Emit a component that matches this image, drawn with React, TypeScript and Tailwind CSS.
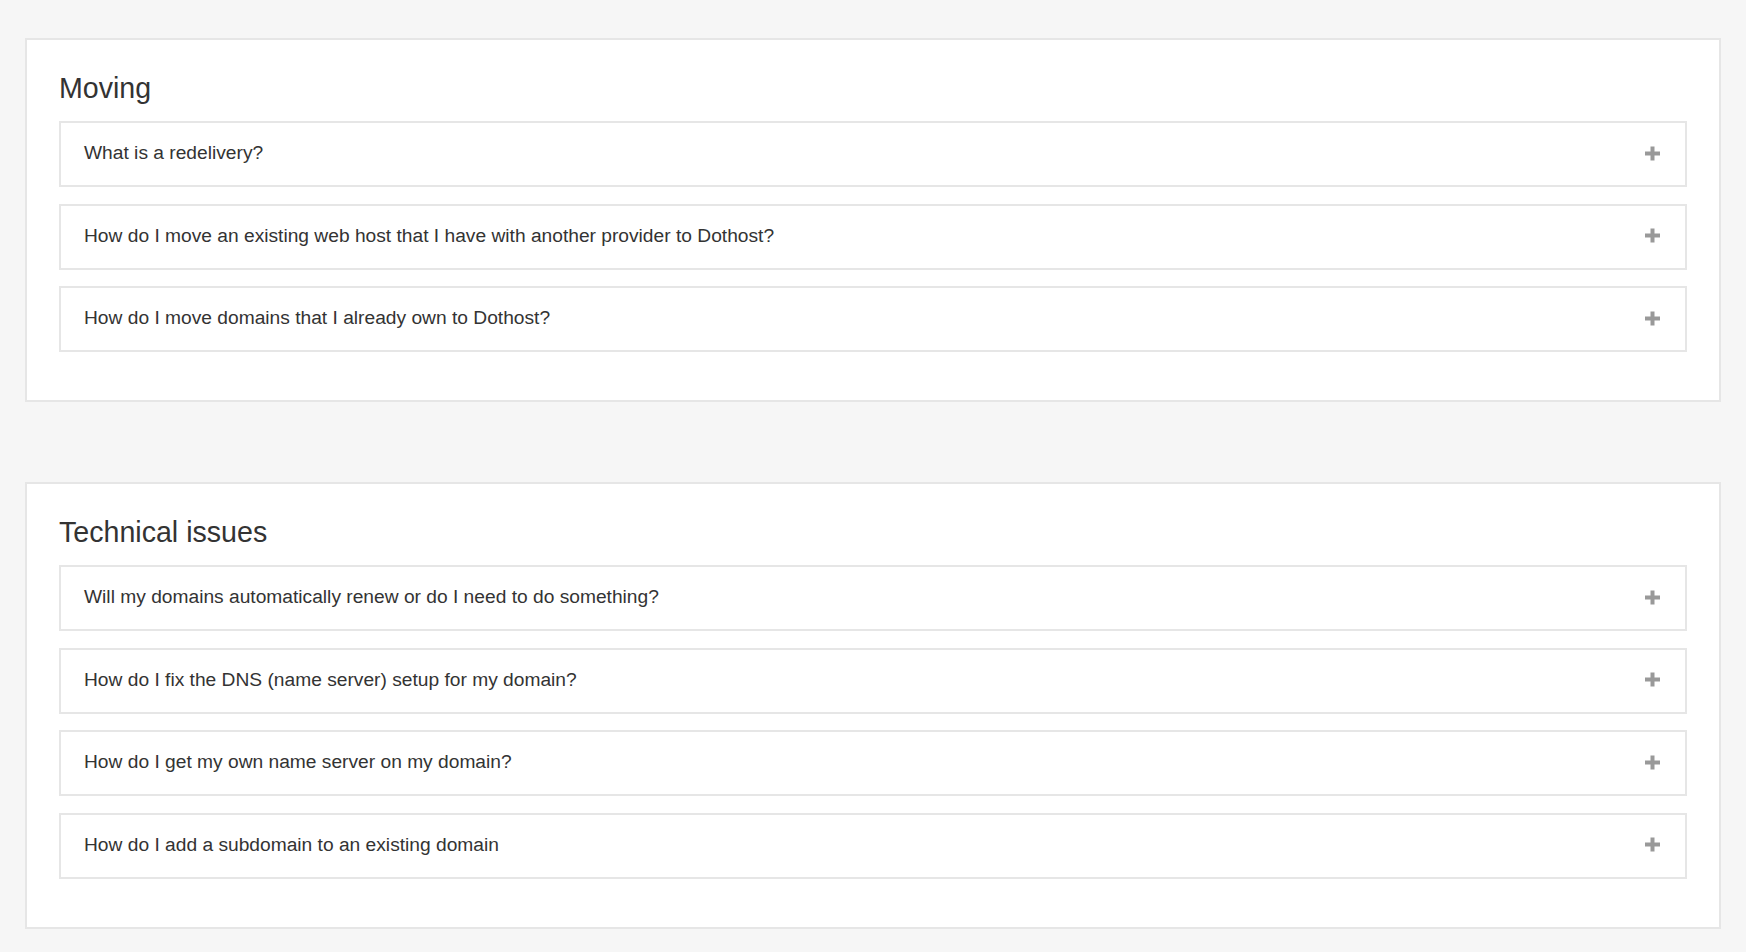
import React from "react";

type Section = {
  title: string;
  questions: string[];
};

const sections: Section[] = [
  {
    title: "Moving",
    questions: [
      "What is a redelivery?",
      "How do I move an existing web host that I have with another provider to Dothost?",
      "How do I move domains that I already own to Dothost?",
    ],
  },
  {
    title: "Technical issues",
    questions: [
      "Will my domains automatically renew or do I need to do something?",
      "How do I fix the DNS (name server) setup for my domain?",
      "How do I get my own name server on my domain?",
      "How do I add a subdomain to an existing domain",
    ],
  },
];

function PlusIcon() {
  return (
    <svg width="15" height="15" viewBox="0 0 15 15" className="shrink-0">
      <rect x="0" y="5.5" width="15" height="4" fill="#999" />
      <rect x="5.5" y="0.5" width="4" height="14" fill="#999" />
    </svg>
  );
}

function FaqItem({ question }: { question: string }) {
  return (
    <button
      type="button"
      className="flex h-[66px] w-full items-center justify-between border-2 border-[#e6e6e6] bg-white pb-[2px] pl-[23px] pr-[25px] text-left"
    >
      <span className="text-[19.2px] leading-none text-[#333]">{question}</span>
      <PlusIcon />
    </button>
  );
}

function FaqCard({ section }: { section: Section }) {
  return (
    <div className="border-2 border-[#e6e6e6] bg-white px-8 pt-[30px] pb-[48px]">
      <h2 className="mb-[15px] text-[28.6px] font-normal leading-[36px] text-[#333]">
        {section.title}
      </h2>
      <div className="flex flex-col gap-[16.5px]">
        {section.questions.map((q) => (
          <FaqItem key={q} question={q} />
        ))}
      </div>
    </div>
  );
}

export default function App() {
  return (
    <div
      className="min-h-[952px] bg-[#f6f6f6] px-[25px] pt-[38px] pb-[25px]"
      style={{ fontFamily: '"Liberation Sans", Arial, sans-serif' }}
    >
      <div className="flex flex-col gap-[80px]">
        {sections.map((s) => (
          <FaqCard key={s.title} section={s} />
        ))}
      </div>
    </div>
  );
}
